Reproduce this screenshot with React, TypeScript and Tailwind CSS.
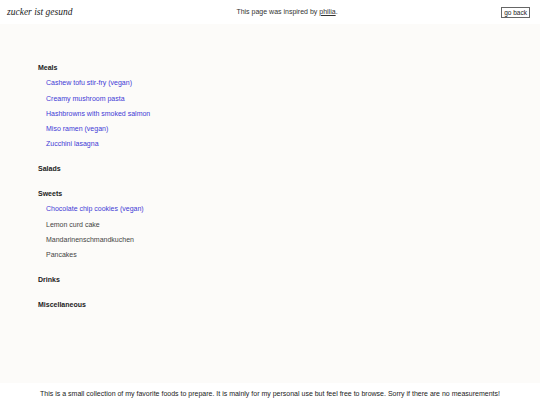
const sections: { name: string; items: { label: string; link: boolean }[] }[] = [
  {
    name: "Meals",
    items: [
      { label: "Cashew tofu stir-fry (vegan)", link: true },
      { label: "Creamy mushroom pasta", link: true },
      { label: "Hashbrowns with smoked salmon", link: true },
      { label: "Miso ramen (vegan)", link: true },
      { label: "Zucchini lasagna", link: true },
    ],
  },
  { name: "Salads", items: [] },
  {
    name: "Sweets",
    items: [
      { label: "Chocolate chip cookies (vegan)", link: true },
      { label: "Lemon curd cake", link: false },
      { label: "Mandarinenschmandkuchen", link: false },
      { label: "Pancakes", link: false },
    ],
  },
  { name: "Drinks", items: [] },
  { name: "Miscellaneous", items: [] },
];

export default function App() {
  return (
    <div className="flex min-h-[405px] w-[540px] flex-col bg-white font-['Liberation_Sans',Arial,sans-serif] text-[7px] text-[#333]">
      <header className="flex h-[24px] items-center justify-between px-[7px]">
        <span className="w-[154px] font-['Liberation_Serif',serif] text-[9.5px] italic text-[#222]">zucker ist gesund</span>
        <span className="text-[#333]">
          This page was inspired by <a className="underline text-[#333]">philia</a>.
        </span>
        <span className="flex w-[120px] justify-end pr-[3px]">
          <button className="border border-[#666] px-[2px] text-[6.5px] leading-[9px] text-[#222]">go back</button>
        </span>
      </header>
      <main className="flex h-[359px] flex-col bg-[#fcfbf9] pl-[38px] pt-[40px]">
        {sections.map((s) => (
          <section key={s.name} className="mb-[9.5px] flex flex-col">
            <h2 className="h-[15.3px] font-bold leading-[8px] text-[#222]">{s.name}</h2>
            <ul className="flex flex-col pl-[8px]">
              {s.items.map((it) => (
                <li key={it.label} className="h-[15.3px] leading-[8px]">
                  {it.link ? <a className="text-[#3f3ad6]">{it.label}</a> : <span className="text-[#444]">{it.label}</span>}
                </li>
              ))}
            </ul>
          </section>
        ))}
      </main>
      <footer className="flex h-[22px] items-center justify-center text-[#222]">
        This is a small collection of my favorite foods to prepare. It is mainly for my personal use but feel free to browse. Sorry if there are no measurements!
      </footer>
    </div>
  );
}
